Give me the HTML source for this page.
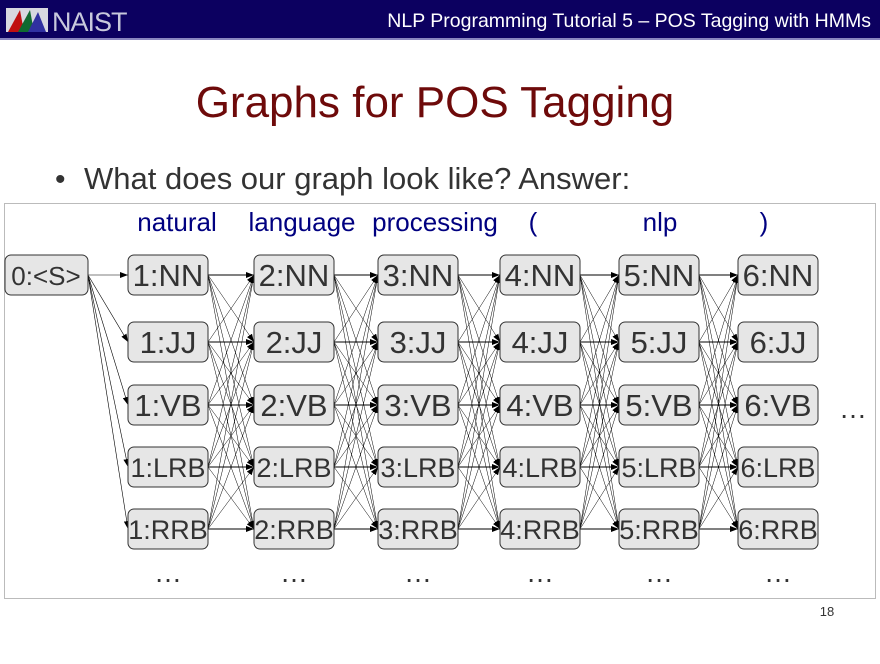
<!DOCTYPE html>
<html><head><meta charset="utf-8"><style>
body{margin:0;width:880px;height:659px;background:#fff;overflow:hidden;font-family:"Liberation Sans",sans-serif}
</style></head><body>
<svg id="s" width="880" height="659" xmlns="http://www.w3.org/2000/svg" font-family="Liberation Sans, sans-serif">
<defs><marker id="a" markerWidth="8" markerHeight="6" refX="8" refY="3" orient="auto" markerUnits="userSpaceOnUse"><path d="M0,0 L8,3 L0,6z" fill="#000"/></marker></defs>
<rect x="0" y="0" width="880" height="38" fill="#0c0060"/>
<rect x="0" y="38" width="880" height="2" fill="#8a86c0"/>
<rect x="6" y="8" width="42" height="24" fill="#d8d8e0"/>
<path d="M8,32 L20,10 L24,32z" fill="#c01010"/><path d="M18,32 L30,10 L34,32z" fill="#106a30"/><path d="M28,32 L38,12 L46,32z" fill="#3030a0"/>
<text x="52" y="31" font-size="27" fill="#c8c8dc" letter-spacing="-1">NAIST</text>
<text x="871" y="27" font-size="19.5" fill="#fff" text-anchor="end">NLP Programming Tutorial 5 – POS Tagging with HMMs</text>
<text x="435" y="117" font-size="44" fill="#6e0a0a" text-anchor="middle">Graphs for POS Tagging</text>
<text x="55" y="189" font-size="30" fill="#333">•</text>
<text x="84" y="189" font-size="31" fill="#333">What does our graph look like? Answer:</text>
<rect x="4.5" y="203.5" width="871" height="395" fill="none" stroke="#bbb"/>
<g id="g"></g>
<text x="827" y="616" font-size="13" fill="#333" text-anchor="middle">18</text>
</svg>
<script>
var g=document.getElementById('g'),h='';
var xs=[128,254,378,500,619,738],rows=[275,342,405,467,529],tags=['NN','JJ','VB','LRB','RRB'];
var words=['natural','language','processing','(','nlp',')'],wx=[177,302,435,533,660,764];
for(var r=0;r<5;r++)h+='<line x1="88" y1="275" x2="128" y2="'+rows[r]+'" stroke="#000" stroke-width="0.6" marker-end="url(#a)"/>';
for(var c=0;c<5;c++)for(var i=0;i<5;i++)for(var j=0;j<5;j++)
 h+='<line x1="'+(xs[c]+80)+'" y1="'+rows[i]+'" x2="'+xs[c+1]+'" y2="'+rows[j]+'" stroke="#000" stroke-width="'+(i==j?1:0.5)+'" marker-end="url(#a)"/>';
h+='<rect x="5" y="255" width="83" height="40" rx="6" fill="#e6e6e6" stroke="#333"/><text x="46" y="285" font-size="26" fill="#333" text-anchor="middle">0:&lt;S&gt;</text>';
for(var c=0;c<6;c++){
 h+='<text x="'+wx[c]+'" y="231" font-size="26" fill="#000080" text-anchor="middle">'+words[c]+'</text>';
 for(var r=0;r<5;r++){var t=tags[r],fs=t.length>2?27:31;
  h+='<rect x="'+xs[c]+'" y="'+(rows[r]-20)+'" width="80" height="40" rx="6" fill="#e6e6e6" stroke="#333"/>';
  h+='<text x="'+(xs[c]+40)+'" y="'+(rows[r]+(fs>28?11:10))+'" font-size="'+fs+'" fill="#333" text-anchor="middle">'+(c+1)+':'+t+'</text>';}
 h+='<text x="'+(xs[c]+40)+'" y="582" font-size="28" fill="#333" text-anchor="middle">…</text>';}
h+='<text x="853" y="418" font-size="28" fill="#333" text-anchor="middle">…</text>';
g.innerHTML=h;
</script>
</body></html>
